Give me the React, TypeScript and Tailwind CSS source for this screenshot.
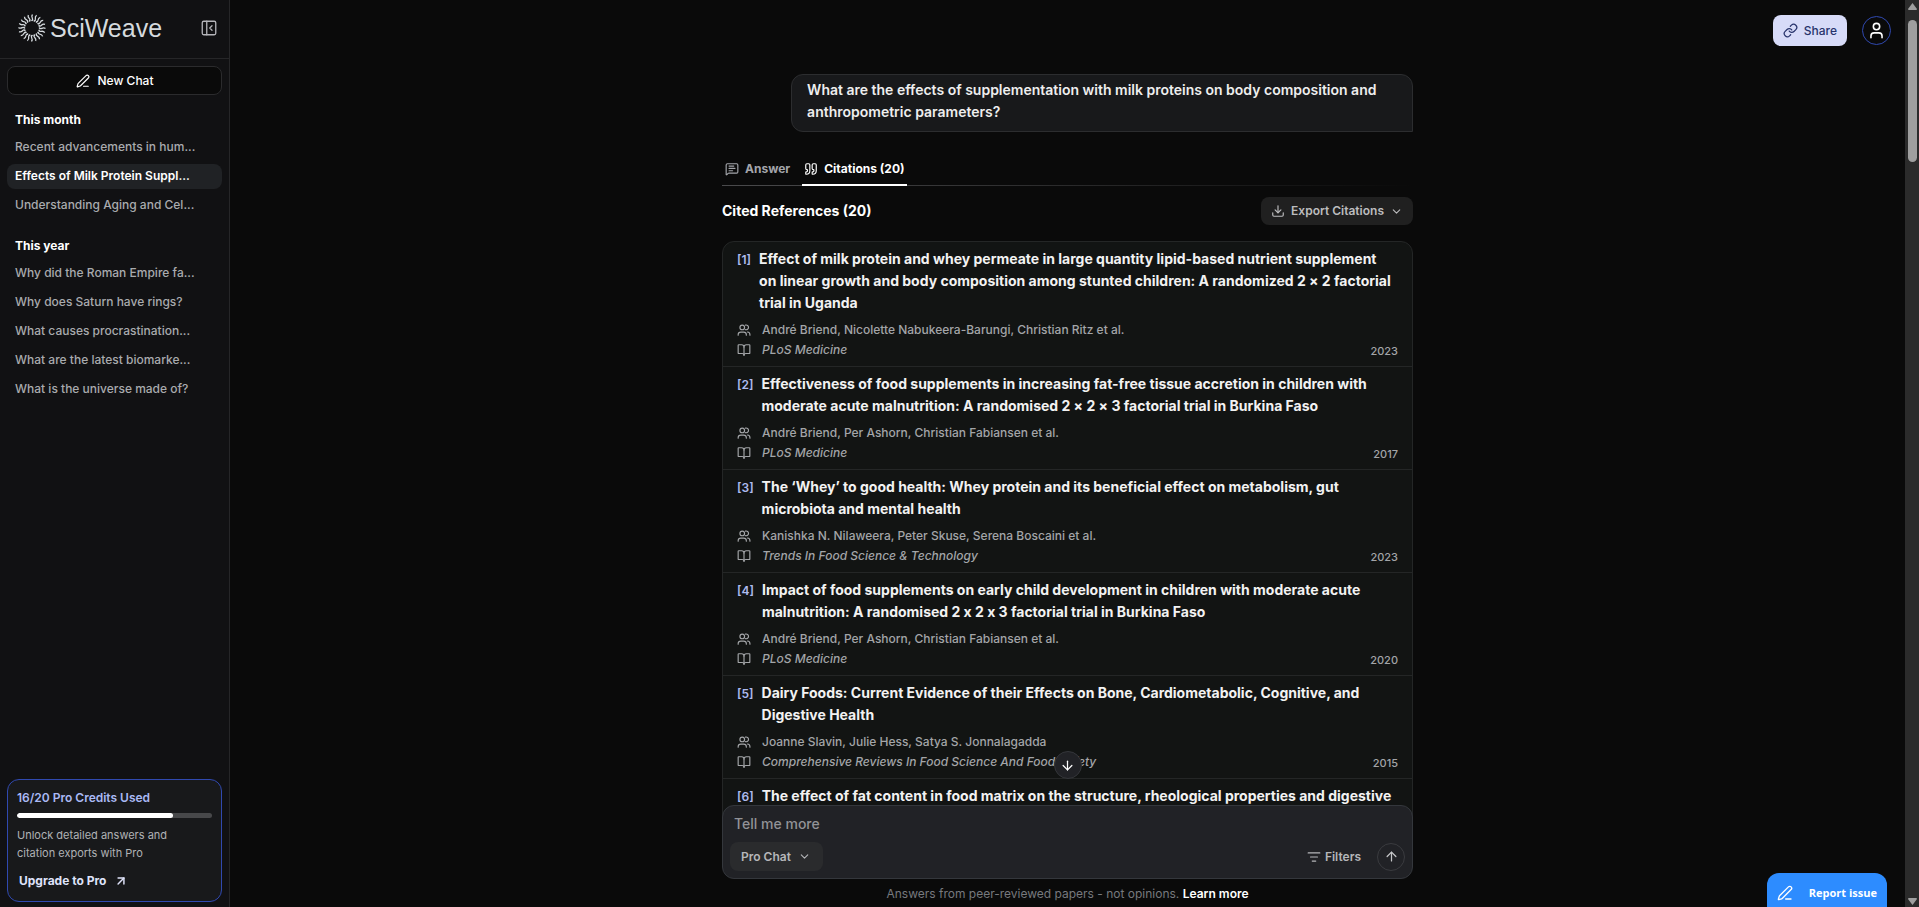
import { useState } from "react";
import {
  ArrowDown,
  ArrowUp,
  ArrowUpRight,
  BookOpen,
  ChevronDown,
  Download,
  Link,
  ListFilter,
  MessageSquareText,
  PanelLeftClose,
  PenLine,
  Quote,
  User,
} from "lucide-react";

const historyGroups = [
  {
    title: "This month",
    chats: [
      "Recent advancements in hum...",
      "Effects of Milk Protein Suppl...",
      "Understanding Aging and Cel...",
    ],
  },
  {
    title: "This year",
    chats: [
      "Why did the Roman Empire fa...",
      "Why does Saturn have rings?",
      "What causes procrastination...",
      "What are the latest biomarke...",
      "What is the universe made of?",
    ],
  },
];

const references = [
  {
    title:
      "Effect of milk protein and whey permeate in large quantity lipid-based nutrient supplement\non linear growth and body composition among stunted children: A randomized 2 × 2 factorial\ntrial in Uganda",
    authors: "André Briend, Nicolette Nabukeera-Barungi, Christian Ritz et al.",
    journal: "PLoS Medicine",
    year: 2023,
  },
  {
    title:
      "Effectiveness of food supplements in increasing fat-free tissue accretion in children with\nmoderate acute malnutrition: A randomised 2 × 2 × 3 factorial trial in Burkina Faso",
    authors: "André Briend, Per Ashorn, Christian Fabiansen et al.",
    journal: "PLoS Medicine",
    year: 2017,
  },
  {
    title:
      "The ‘Whey’ to good health: Whey protein and its beneficial effect on metabolism, gut\nmicrobiota and mental health",
    authors: "Kanishka N. Nilaweera, Peter Skuse, Serena Boscaini et al.",
    journal: "Trends In Food Science & Technology",
    year: 2023,
  },
  {
    title:
      "Impact of food supplements on early child development in children with moderate acute\nmalnutrition: A randomised 2 x 2 x 3 factorial trial in Burkina Faso",
    authors: "André Briend, Per Ashorn, Christian Fabiansen et al.",
    journal: "PLoS Medicine",
    year: 2020,
  },
  {
    title:
      "Dairy Foods: Current Evidence of their Effects on Bone, Cardiometabolic, Cognitive, and\nDigestive Health",
    authors: "Joanne Slavin, Julie Hess, Satya S. Jonnalagadda",
    journal: "Comprehensive Reviews In Food Science And Food Safety",
    year: 2015,
  },
  {
    title:
      "The effect of fat content in food matrix on the structure, rheological properties and digestive",
  },
];

const Logo = () => (
  <a href="#" className="flex items-center gap-1 text-[#d5dade]">
    <svg viewBox="-14 -14 28 28" className="size-7" fill="none" stroke="currentColor">
      {Array.from({ length: 20 }, (_, i) => (
        <g key={i} transform={`rotate(${i * 18})`}>
          <path d="M0 -7.5 C2.5 -9 -2 -10.5 0.5 -13.5" strokeWidth="1.3" />
          <circle cx="0" cy="-7.5" r="0.8" fill="currentColor" stroke="none" />
        </g>
      ))}
    </svg>
    <span className="font-['Liberation_Sans',Arial,sans-serif] text-[25px] leading-7">
      SciWeave
    </span>
  </a>
);

const AuthorsIcon = () => (
  <svg
    viewBox="0 0 24 24"
    className="size-[14px] shrink-0"
    fill="none"
    stroke="currentColor"
    strokeWidth="2"
    strokeLinecap="round"
  >
    <circle cx="9" cy="7.5" r="4" />
    <path d="M14.5 3.7a4 4 0 1 1 0 7.6" />
    <path d="M2 21v-1a4.5 4.5 0 0 1 4.5-4.5h5A4.5 4.5 0 0 1 16 20v1" />
    <path d="M18 15.5a4.5 4.5 0 0 1 4.2 4.5v1" />
  </svg>
);

const Sidebar = () => {
  const [active, setActive] = useState("Effects of Milk Protein Suppl...");

  return (
    <aside className="flex w-[230px] shrink-0 flex-col border-r border-[#262628] bg-[#111113]">
      <div className="flex h-[59px] shrink-0 items-center justify-between border-b border-[#262628] pr-[11px] pb-0.5 pl-[18px]">
        <Logo />
        <button aria-label="Close sidebar" className="text-[#b5b5ba]">
          <PanelLeftClose size={18} strokeWidth={1.75} />
        </button>
      </div>

      <div className="flex min-h-0 flex-1 flex-col px-[7px] pt-[7px] pb-[5px]">
        <button className="flex h-[29px] shrink-0 items-center justify-center gap-2 rounded-lg border border-[#2b2b2d] bg-[#0a0a0a] text-xs font-medium text-white">
          <PenLine size={14} />
          New Chat
        </button>

        {historyGroups.map((group) => (
          <nav key={group.title} aria-label={group.title} className="mt-[15px] mb-[3px]">
            <h2 className="mb-[5px] px-2 text-xs leading-5 font-bold text-white">
              {group.title}
            </h2>
            <ul className="flex flex-col gap-1">
              {group.chats.map((chat) => (
                <li key={chat}>
                  <a
                    href="#"
                    onClick={() => setActive(chat)}
                    className={
                      chat === active
                        ? "block h-[25px] truncate rounded-lg bg-[#202225] px-2 text-xs leading-6 font-semibold text-white"
                        : "block h-[25px] truncate rounded-lg px-2 text-xs leading-6 font-medium text-[#a9abae]"
                    }
                  >
                    {chat}
                  </a>
                </li>
              ))}
            </ul>
          </nav>
        ))}

        <section className="mt-auto rounded-xl border border-[#3049b0] bg-[#18191b] px-[9px] pt-2 pb-2">
          <h2 className="text-xs leading-5 font-semibold text-[#aab9f5]">
            16/20 Pro Credits Used
          </h2>
          <div className="mt-[5px] h-[5px] overflow-hidden rounded-full bg-[#47484a]">
            <div className="h-full w-4/5 rounded-full bg-white" />
          </div>
          <p className="mt-2 text-[11px] leading-[18px] text-[#b0b2b5]">
            Unlock detailed answers and
            <br />
            citation exports with Pro
          </p>
          <a
            href="#"
            className="mt-[7px] flex items-center gap-2 px-0.5 text-xs leading-6 font-bold text-[#dfe3fa]"
          >
            Upgrade to Pro
            <ArrowUpRight size={14} strokeWidth={2.5} />
          </a>
        </section>
      </div>
    </aside>
  );
};

const ReferenceCard = ({ item, index }: any) => (
  <li className="border-b border-[#242626] px-[14px] py-1.5">
    <h3 className="flex gap-2 text-sm leading-[22px] font-bold text-[#f2f2f2]">
      <span className="text-xs leading-6 font-semibold text-[#aebbee]">[{index + 1}]</span>
      <span className="whitespace-pre [font-feature-settings:'calt'_0]">{item.title}</span>
    </h3>
    {item.authors && (
      <div className="mt-1.5 flex items-end justify-between text-xs leading-5 font-medium text-[#a3a5a8]">
        <div>
          <p className="flex items-center gap-[11px]">
            <AuthorsIcon />
            {item.authors}
          </p>
          <p className="flex items-center gap-[11px] italic">
            <BookOpen size={14} />
            {item.journal}
          </p>
        </div>
        <span className="text-[11px] leading-[18px]">{item.year}</span>
      </div>
    )}
  </li>
);

const Composer = () => {
  const [message, setMessage] = useState("");

  return (
    <div className="relative z-10 mx-auto -mt-3 w-full max-w-[691px] shrink-0">
      <button
        aria-label="Scroll to bottom"
        className="absolute -top-[54px] left-1/2 flex size-7 -translate-x-1/2 items-center justify-center rounded-full border border-[#34363a] bg-[#212226] text-white"
      >
        <ArrowDown size={15} />
      </button>
      <form
        onSubmit={(e) => e.preventDefault()}
        className="rounded-xl border border-[#34373c] bg-[#212226] px-[7px] pt-2 pb-[7px]"
      >
        <input
          type="text"
          aria-label="Follow-up question"
          placeholder="Tell me more"
          value={message}
          onChange={(e) => setMessage(e.target.value)}
          className="block h-5 w-full bg-transparent px-1 text-sm font-medium text-white outline-none placeholder:text-[#929397]"
        />
        <div className="mt-2 flex items-center justify-between">
          <div className="relative">
            <select
              aria-label="Chat mode"
              className="h-[29px] w-[93px] appearance-none rounded-lg bg-[#2a2b2d] pl-[11px] text-xs font-semibold text-[#b5b6b9]"
            >
              <option>Pro Chat</option>
              <option>Chat</option>
            </select>
            <ChevronDown
              size={13}
              className="pointer-events-none absolute top-2 right-3 text-[#b5b6b9]"
            />
          </div>
          <div className="flex items-center gap-4">
            <button
              type="button"
              className="flex items-center gap-1 text-xs font-semibold text-[#b5b6b9]"
            >
              <ListFilter size={14} />
              Filters
            </button>
            <button
              aria-label="Send"
              className="flex size-7 items-center justify-center rounded-full border border-[#3a3b3f] text-[#c5c6c8]"
            >
              <ArrowUp size={15} />
            </button>
          </div>
        </div>
      </form>
      <p className="pt-[5px] pb-[3px] text-center text-xs leading-5 text-[#77797e]">
        Answers from peer-reviewed papers - not opinions.{" "}
        <a href="#" className="font-semibold text-white">
          Learn more
        </a>
      </p>
    </div>
  );
};

const ChatView = () => (
  <main className="relative flex min-w-0 flex-1 flex-col bg-[#0a0a0a]">
    <div className="absolute top-[15px] right-3.5 flex items-center gap-[15px]">
      <button className="flex h-[31px] items-center gap-1.5 rounded-lg bg-[#d7dbf8] px-2.5 text-xs font-medium text-[#28346c]">
        <Link size={15} />
        Share
      </button>
      <button
        aria-label="Account"
        className="flex size-[29px] items-center justify-center rounded-full border border-[#3049b0] text-white"
      >
        <User size={19} />
      </button>
    </div>

    <div className="mx-auto min-h-0 w-full max-w-[691px] flex-1 overflow-hidden pt-[74px]">
      <div className="ml-auto w-[90%] rounded-xl rounded-br-none border border-[#2c2d2f] bg-[#18191b] px-[15px] pt-1 pb-2 text-sm leading-[22px] font-semibold whitespace-pre text-[#eeeeee]">
        {
          "What are the effects of supplementation with milk proteins on body composition and\nanthropometric parameters?"
        }
      </div>

      <div role="tablist" className="mt-[23px] flex gap-3 text-xs font-bold">
        <button
          role="tab"
          aria-selected="false"
          className="flex h-[31px] items-center gap-1.5 border-b-2 border-transparent pb-0.5 pl-[3px] text-[#a3a5aa]"
        >
          <MessageSquareText size={14} />
          Answer
        </button>
        <button
          role="tab"
          aria-selected="true"
          className="relative z-10 flex h-[31px] items-center gap-1.5 border-b-2 border-white px-0.5 pb-0.5 text-white"
        >
          <Quote size={14} />
          Citations (20)
        </button>
      </div>
      <div className="-mt-px h-px bg-linear-to-r from-[#4a4a4c] to-transparent" />

      <div className="mt-[11px] flex items-center justify-between">
        <h2 className="text-sm font-bold text-white">Cited References (20)</h2>
        <button className="flex h-7 items-center gap-1.5 rounded-lg bg-[#202020] px-2.5 text-xs font-semibold text-[#bcbcbe]">
          <Download size={14} />
          Export Citations
          <ChevronDown size={13} />
        </button>
      </div>

      <ul className="mt-4 rounded-t-xl border border-[#242626] bg-[#121413]">
        {references.map((item, index) => (
          <ReferenceCard key={item.title} item={item} index={index} />
        ))}
      </ul>
    </div>

    <Composer />

    <button className="absolute right-[18px] bottom-0 flex h-[34px] items-center gap-4 rounded-t-xl bg-[#2d8cff] px-2.5 pt-1.5 font-['Open_Sans','Noto_Sans',sans-serif] text-[11px] font-bold text-white">
      <PenLine size={16} />
      Report issue
    </button>
  </main>
);

const Scrollbar = () => (
  <div
    aria-hidden="true"
    className="flex w-3.5 shrink-0 flex-col items-center justify-between bg-[#2b2b2b] pt-[3px] pb-0.5"
  >
    <div className="flex flex-col items-center gap-2.5">
      <svg width="9" height="7" viewBox="0 0 9 7" fill="#9f9f9f">
        <path d="M4.5 0 L9 6 Q9 7 8 7 H1 Q0 7 0 6Z" />
      </svg>
      <div className="h-[142px] w-[9px] rounded-full bg-[#9f9f9f]" />
    </div>
    <svg width="9" height="7" viewBox="0 0 9 7" fill="#9f9f9f">
      <path d="M4.5 7 L9 1 Q9 0 8 0 H1 Q0 0 0 1Z" />
    </svg>
  </div>
);

const App = () => {
  return (
    <div className="flex h-screen overflow-hidden bg-[#0a0a0a] font-['Inter','Liberation_Sans',sans-serif]">
      <Sidebar />
      <ChatView />
      <Scrollbar />
    </div>
  );
};

export default App;
